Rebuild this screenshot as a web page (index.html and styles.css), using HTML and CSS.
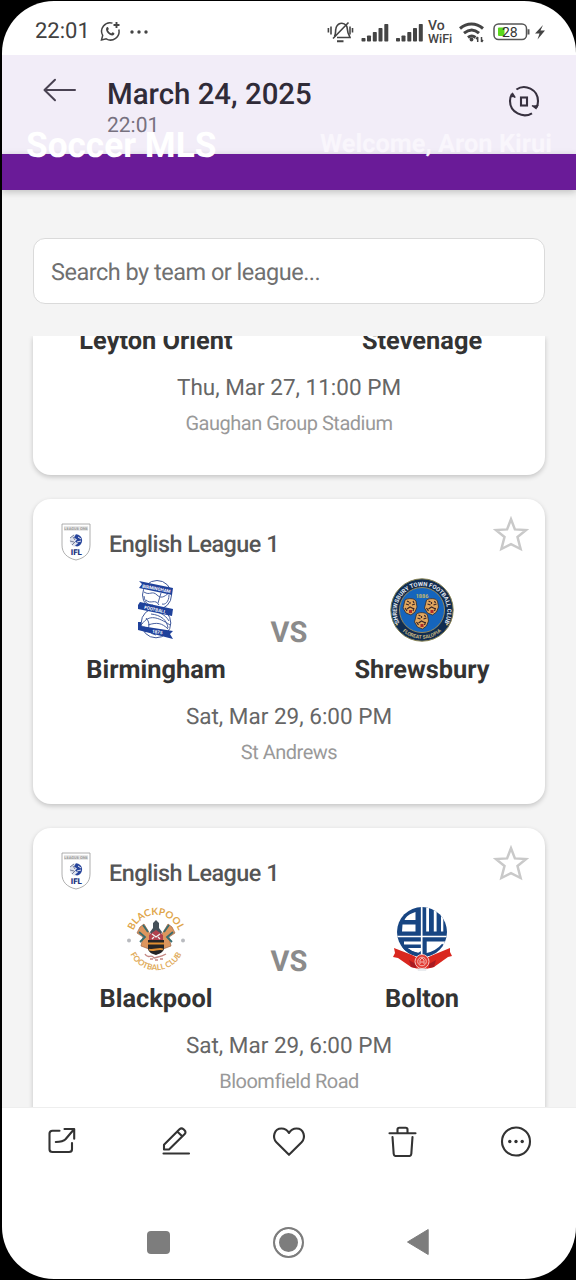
FILE: index.html
```html
<!DOCTYPE html>
<html lang="en">
<head>
<meta charset="utf-8">
<title>Soccer MLS</title>
<link rel="stylesheet" href="styles.css">
</head>
<body>
<svg class="defs" width="0" height="0" aria-hidden="true">
  <symbol id="star" viewBox="0 0 36 36"><path d="M18 3.2 L21.9 13.4 L33.2 14 L24.5 21 L27.6 33 L18 28.2 L8.400 33 L11.500 21 L2.800 14 L14.100 13.400 Z" fill="none" stroke="#c9c9c9" stroke-width="2.500"/></symbol>
  <symbol id="league" viewBox="0 0 30 38">
    <path d="M1 1H29V22C29 30 24 35 15 37C6 35 1 30 1 22Z" fill="#fff" stroke="#999" stroke-width=".8"/>
    <path d="M3 3H27V8H3Z" fill="#e8e8e8"/>
    <text x="15" y="7.300" class="t-league-top" text-anchor="middle">LEAGUE ONE</text>
    <circle cx="15" cy="17.500" r="6.300" fill="#dfe3ee"/>
    <path d="M15 11.300a6.200 6.200 0 0 1 1 12.300l-2-1 3-2-3-2 2-2-3-2z" fill="#27449b"/>
    <path d="M9 15l4-3M9 18l4 1M11 22l3-3M12 14l2 3" stroke="#777f99" stroke-width="1"/>
    <path d="M17 14l3 2M16 19l4-1" stroke="#fff" stroke-width=".9"/>
    <text x="15.300" y="31.500" class="t-league" text-anchor="middle">IFL</text>
  </symbol>
</svg>
<div class="screen">
  <div class="status">
    <span class="clock">22:01</span>
    <svg class="chat" width="21" height="21" viewBox="0 0 21 21" fill="none" stroke="#444" stroke-width="1.500"><path d="M12.500 2.100A8.500 8.500 0 0 0 2.700 14.400L1.500 19l4.700-1.200A8.500 8.500 0 0 0 18.800 8.500"/><path d="M16.500 1v6M13.500 4h6" stroke-width="1.900"/><path d="M6.500 6.500c1-1 1.600-.6 2.300 1.400L8 9.300c.8 1.600 1.800 2.500 3.200 3.100l1.300-1.100c2 .7 2.300 1.200 1.600 2.200-1 1.300-2.600 1.300-4.700-.1C7 11.800 5.200 9 6.500 6.500z" fill="#444" stroke="none"/></svg>
    <svg class="more" width="20" height="6" viewBox="0 0 20 6" fill="#444"><circle cx="3" cy="3" r="1.700"/><circle cx="10" cy="3" r="1.700"/><circle cx="17" cy="3" r="1.700"/></svg>
    <svg class="tray" width="222" height="26" viewBox="327 18 222 26" fill="#444">
      <g fill="none" stroke="#444" stroke-width="1.600"><path d="M334.500 35.500c1.500-2.500.8-5 1.300-7.500 1-6 7-7.500 10.500-3.500 1.800 2.500.5 6.500 2.700 9.500l1 2.500h-13"/><path d="M348.500 21.500 333 37.500M331 25.500v8M328.400 27v4.500M350 25.500v8M352.500 27v4.500"/><path d="M337 40.200h6.500" stroke-width="2"/></g>
      <g id="bars"><rect x="361.500" y="37" width="4" height="3.500" rx=".8"/><rect x="367" y="34.500" width="4" height="6" rx=".8"/><rect x="372.800" y="31" width="4" height="9.500" rx=".8"/><rect x="378.500" y="27" width="4" height="13.500" rx=".8"/><rect x="384.300" y="23" width="4" height="17.500" rx=".8"/></g>
      <use href="#bars" x="34.500"/>
      <text x="428" y="29" class="t-net">Vo</text><text x="428" y="41.500" class="t-net wifi">WiFi</text>
      <g fill="none" stroke="#444" stroke-width="3"><path d="M460 27.500c7-6 16-6 23 0M464 32.200c5-4 10.500-4 15 0M468 36.500c2.500-2 5-2 7.500 0" /></g><circle cx="471.500" cy="38.500" r="1.900"/><path d="M477.700 41v-5M476 38l1.700-2M481.500 36v5M483 39l-1.500 2" stroke="#444" stroke-width="1.500"/>
      <rect x="494" y="23" width="32.500" height="15.500" rx="4.500" fill="#fff" stroke="#555" stroke-width="1.500"/><rect x="498" y="26.500" width="6.500" height="8.500" rx="1" fill="#5bd81d"/><path d="M528.500 28.200v5.200" stroke="#555" stroke-width="2"/>
      <text x="502" y="36" class="t-batt">28</text>
      <path d="M543 24 535 32.500h4.500L537.500 38.500 545 29.500h-4.500z"/>
    </svg>
  </div>
  <header class="viewer">
    <svg class="back" width="34" height="24" viewBox="0 0 34 24" fill="none" stroke="#4a4353" stroke-width="2" stroke-linecap="round" stroke-linejoin="round"><path d="M1.500 12H32M12 1.800 1.500 12 12 22.200"/></svg>
    <div class="when"><span class="date">March 24, 2025</span><span class="time">22:01</span></div>
    <svg class="scan" width="34" height="34" viewBox="0 0 34 34" fill="none" stroke="#37313f" stroke-width="2.100"><path d="M9.400 5.500C18-.6 31 5.500 31 17c0 2.400-.5 4.500-1.400 6.300M25 29.300C16 34.500 3 28.500 3 17c0-3 .7-5 2-7.300"/><path d="M8.200 13.600 5.700 9.800 4 13M31 21l-2 3.500-4-3" fill="#37313f" stroke-width="1.500"/><rect x="14" y="13.500" width="6" height="8"/></svg>
  </header>
  <div class="appbar"><b class="brand">Soccer MLS</b><b class="welcome">Welcome, Aron Kirui</b></div>
  <main class="page">
    <div class="search">Search by team or league...</div>
    <section class="list">
      <article class="card clipped">
        <div class="match"><div class="team"><span class="name">Leyton Orient</span></div><span></span><div class="team"><span class="name">Stevenage</span></div></div>
        <p class="kick">Thu, Mar 27, 11:00 PM</p><p class="venue">Gaughan Group Stadium</p>
      </article>
      <article class="card">
        <div class="head"><svg class="badge" width="30" height="38"><use href="#league"/></svg><span class="comp">English League 1</span><svg class="fav" width="36" height="36"><use href="#star"/></svg></div>
        <div class="match">
          <div class="team">
            <svg width="64" height="64" viewBox="0 0 64 64">
              <g fill="#fff" stroke="#3d5699" stroke-width="1"><circle cx="33" cy="17" r="14.500"/><circle cx="32" cy="45" r="14.800"/></g>
              <path d="M20 14c6 4 8-2 13 3s9 0 13-3M22 22c5 5 9-2 13 5M20 18c1 8 6 10 9 9M37 15l-3 10M45 17c0 7-4 10-7 9M18 46c7-10 16-7 28 1M27 36c10 1 16 6 17 14M22 40c5 5 3 12-1 14M24 47c9-3 14-2 20 4M32 33c3 2 9 3 13 10M19 49c6 0 4 6 13 8" fill="none" stroke="#4860a0" stroke-width="1"/>
              <g fill="#1f419b"><path d="M15 3 49 10l-1 7-33-7 3-4z"/><path d="M14 27l2-3 33 7-1 7-34-7z"/><path d="M14 44l3 0 0 4 32 5-3 3 3 5-35-9z"/></g>
              <text class="t-tiny" transform="translate(18 9.500) rotate(11)">BIRMINGHAM</text><text class="t-tiny" transform="translate(20 30.800) rotate(12)">FOOTBALL</text><text class="t-tiny" transform="translate(28 54.800) rotate(8)">1875</text>
            </svg>
            <span class="name">Birmingham</span>
          </div>
          <span class="vs">VS</span>
          <div class="team">
            <svg width="64" height="64" viewBox="0 0 64 64">
              <defs><path id="st" d="M9 43.800A25.300 25.300 0 1 1 55 43.800"/><path id="sb" d="M10.500 51A28.500 28.500 0 0 0 53.500 51"/></defs>
              <circle cx="32" cy="32" r="31.200" fill="#112d51" stroke="#8b8555" stroke-width="1"/><circle cx="32" cy="32" r="22.500" fill="#1565bd" stroke="#b49b58" stroke-width=".8"/>
              <text class="t-ring"><textPath href="#st" startOffset="50%" text-anchor="middle">SHREWSBURY TOWN FOOTBALL CLUB</textPath></text>
              <text class="t-ring gold"><textPath href="#sb" startOffset="50%" text-anchor="middle">FLOREAT SALOPIA</textPath></text>
              <circle cx="7" cy="46.500" r="1" fill="#c9b46b"/><circle cx="57" cy="46.500" r="1" fill="#c9b46b"/>
              <text x="32" y="19.500" class="t-year" fill="#c7ba6b" text-anchor="middle">1886</text>
              <g id="lion"><path d="M15 22c3-2 9-2 11 1l1 6-2 5-4 3-5-2-3-5z" fill="#e1a75e" stroke="#322929" stroke-width=".8"/><path d="M16 26l3 1M22 27l3-1M17 31l3-2 4 2M20 24v2M15 30l2 3M17 23l2 1M23 23l1 2M24 30l-1 3" stroke="#3a2525" stroke-width="1.200" fill="none"/><path d="M19 32h3v3h-3z" fill="#ae2a27"/></g>
              <use href="#lion" x="21.500"/><use href="#lion" x="11.500" y="14"/>
            </svg>
            <span class="name">Shrewsbury</span>
          </div>
        </div>
        <p class="kick">Sat, Mar 29, 6:00 PM</p><p class="venue">St Andrews</p>
      </article>
      <article class="card">
        <div class="head"><svg class="badge" width="30" height="38"><use href="#league"/></svg><span class="comp">English League 1</span><svg class="fav" width="36" height="36"><use href="#star"/></svg></div>
        <div class="match">
          <div class="team">
            <svg width="64" height="64" viewBox="0 0 64 64">
              <defs><path id="bt" d="M8.500 27A24 24 0 0 1 55.500 27"/><path id="bb" d="M4 40A28.500 28.500 0 0 0 60 40"/></defs>
              <text class="t-bpl" fill="#dfa64b"><textPath href="#bt" startOffset="50%" text-anchor="middle">BLACKPOOL</textPath></text>
              <text class="t-bpl2" fill="#dfac5b"><textPath href="#bb" startOffset="50%" text-anchor="middle">FOOTBALL CLUB</textPath></text>
              <circle cx="5" cy="33.500" r="2" fill="#b9bbc0"/><circle cx="59" cy="33.500" r="2" fill="#b9bbc0"/>
              <path d="M26 27 20 17l-4 3-3 6 6 4-2 9 8 3M38 27l6-10 4 3 3 6-6 4 2 9-8 3" fill="#dc965e" stroke="#9c6548" stroke-width=".7"/>
              <path d="M15 25l6 5-5 5M49 25l-6 5 5 5M19 18l5 7M45 18l-5 7" fill="none" stroke="#356c70" stroke-width="1.800"/>
              <path d="M26 25l3-4v-5l3-3 3 3v5l3 4-2 5h-8z" fill="#46515a"/><path d="M25 28l7-5 7 5v6H25z" fill="#b1404d"/><path d="M28 27l4 3 4-3M28 32l2-2M36 32l-2-2" fill="none" stroke="#eee" stroke-width="1.300"/>
              <path d="M24 33h16v8c0 4-5 6-8 7-4-1-8-3-8-7z" fill="#252426"/><path d="M24 36.500h16M25 42.500c4 2 10-2 14 0" stroke="#df8d31" stroke-width="1.800" fill="none"/>
              <path d="M21 47c3 6 6-1 9 4 3-1 7-1 12-4M26 52h3M31 53h3M36 52h3" fill="none" stroke="#c58883" stroke-width="1.400"/>
            </svg>
            <span class="name">Blackpool</span>
          </div>
          <span class="vs">VS</span>
          <div class="team">
            <svg width="64" height="64" viewBox="0 0 64 64">
              <defs><clipPath id="disc"><circle cx="32" cy="25" r="25"/></clipPath></defs>
              <g clip-path="url(#disc)"><rect x="7" width="50" height="50" fill="#174582"/>
                <path d="M7 29.500H57M31.700 0V50" stroke="#fff" fill="none" stroke-width="1.700"/>
                <g fill="#fff"><path d="M14.500 13C16 9.500 20 6.500 25.500 5v8zM12.500 17.500h13v7H12z"/><path d="M36.200 0h2.800v24.500h-2.800zM43.800 0h2.800v24.500h-2.800zM51 8h2.300v16.500H51z"/><path d="M14 34.600h17v2.900H14zM17 41H31v3l-3 2q-6-1-11-5z"/><path d="M36.700 34.600H60V45h-6C49 47 42 48 36.700 48z"/></g>
                <path d="M36 48Q46 46.500 53.500 38" fill="none" stroke="#174582" stroke-width="3.500"/><path d="M13 39Q20 47 30 48" fill="none" stroke="#174582" stroke-width="3.500"/>
              </g>
              <path d="M4 41 22 48 32 53 43 48 60 41v4l2 4-4 1-14 10-12 3-11-3L8 51l-5-1 2-4z" fill="#d9271f"/><path d="M19 53l7 4v4l-5-1M46 53l-7 4v4l5-1" fill="#a91b22"/>
              <circle cx="32" cy="54.500" r="7" fill="#e23a32" stroke="#f5c5c1" stroke-width="1"/><circle cx="32" cy="54.500" r="4.300" fill="none" stroke="#f5c5c1" stroke-width=".9"/><path d="M30 57v-4l2-2 2 2v4M30.500 55h3" fill="none" stroke="#f9d9d5" stroke-width=".8"/><path d="M27 61.500l10 0-1 2.500h-8z" fill="#e9ecef"/>
            </svg>
            <span class="name">Bolton</span>
          </div>
        </div>
        <p class="kick">Sat, Mar 29, 6:00 PM</p><p class="venue">Bloomfield Road</p>
      </article>
    </section>
  </main>
  <nav class="tools">
    <svg width="32" height="32" viewBox="0 0 32 32"><path d="M13.500 5.800H6.500C4.500 5.800 3.500 6.700 3.500 8.600V24.200C3.500 26.100 4.500 27 6.500 27H23C25 27 26 26.100 26 24.200V18"/><path d="M18.500 4H28.200V13.800M28 4.200 19.500 14.300C17.500 16.500 14.500 17 9.800 17"/></svg>
    <svg width="32" height="32" viewBox="0 0 32 32"><path d="M4.500 28.500H30M5 24.500V19.700L20.500 4.300Q22.500 2.500 24.500 4.300L25.500 5.300Q27.500 7.300 25.500 9.200L10 24.500Z M18.500 6.700 23.200 11.300"/></svg>
    <svg width="36" height="32" viewBox="0 0 36 32"><path d="M18 29.800 5.400 17.200C1 12.500 3 3.500 10.500 3.500 14 3.500 16.500 5.500 18 8 19.500 5.500 22 3.500 25.500 3.500 33 3.500 35 12.500 30.600 17.200Z"/></svg>
    <svg width="32" height="32" viewBox="0 0 32 32"><path d="M1.500 8.300H27.500M9.500 8V4.500Q9.500 2.700 11.300 2.700H17.700Q19.500 2.700 19.500 4.500V8M4.500 12 5.700 29Q5.900 31 7.700 31H21.300Q23.100 31 23.300 29L24.500 12"/></svg>
    <svg width="32" height="32" viewBox="0 0 32 32"><circle cx="16" cy="16.500" r="14"/><g fill="#333" stroke="none"><circle cx="9.800" cy="16.500" r="1.700"/><circle cx="16" cy="16.500" r="1.700"/><circle cx="22.200" cy="16.500" r="1.700"/></g></svg>
  </nav>
  <nav class="keys">
    <span class="recent"></span>
    <span class="home"></span>
    <svg width="22" height="28" viewBox="0 0 22 28"><path d="M21.200 1.500V26.500L.5 14Z" fill="#7d7d7d" stroke="#7d7d7d" stroke-width="1" stroke-linejoin="round"/></svg>
  </nav>
</div>
</body>
</html>
```
FILE: styles.css
```css
* { box-sizing: border-box; }
body { margin: 0; height: 1280px; padding: 1px 0 1px 2px; background: #000; font-family: Roboto, "Liberation Sans", sans-serif; overflow: hidden; text-rendering: geometricPrecision; }
.defs { position: absolute; }
.screen { width: 574px; height: 1278px; border-radius: 52px; background: #fff; overflow: hidden; display: flex; flex-direction: column; }
.status { height: 54px; flex: none; display: flex; align-items: center; padding: 7px 27px 0 33px; color: #414141; }
.clock { font-size: 22px; line-height: 28px; padding-top: 1px; }
.chat { margin-left: 10px; margin-bottom: 1px; }
.more { margin-left: 8px; }
.tray { margin-left: auto; }
.viewer { height: 99px; flex: none; background: #f2edf8; display: flex; padding: 0 35px 0 41px; }
.back { margin-top: 23px; }
.when { display: flex; flex-direction: column; margin-left: 30px; padding-top: 22px; }
.date { font-size: 29.400px; line-height: 36px; font-weight: 500; color: #302b38; white-space: nowrap; }
.time { font-size: 21px; line-height: 26px; color: #77717f; }
.scan { margin: 29px 0 0 auto; }
.appbar { height: 36px; flex: none; background: #6a1b98; position: relative; z-index: 1; box-shadow: 0 2px 7px rgba(0,0,0,.22); clip-path: inset(-40px 0 -12px 0); color: #fff; }
.brand { position: absolute; left: 24px; top: -29px; font-size: 35.200px; line-height: 40px; white-space: nowrap; }
.welcome { position: absolute; right: 24px; top: -25px; font-size: 25.400px; line-height: 30px; font-weight: 700; color: #f9f6fc; white-space: nowrap; }
.page { height: 917px; flex: none; background: #f4f4f4; padding: 48px 31px 0; }
.search { height: 66px; border: 1px solid #dadada; border-radius: 12px; background: #fff; padding: 0 17px; font-size: 23.500px; line-height: 66px; letter-spacing: -.5px; color: #707070; white-space: nowrap; }
.list { height: 771px; margin: 32px -31px 0; padding: 0 31px; overflow: hidden; display: flex; flex-direction: column; gap: 24px; }
.card { height: 305px; flex: none; border-radius: 18px; background: #fff; box-shadow: 0 2px 5px rgba(0,0,0,.2); display: flex; flex-direction: column; }
.clipped { height: 139px; border-radius: 0 0 18px 18px; }
.clipped .match { margin-top: -11px; }
.head { height: 79px; flex: none; display: flex; padding: 0 16px 0 28px; }
.badge { margin-top: 24px; }
.comp { margin-left: 18px; font-size: 23.400px; font-weight: 500; letter-spacing: -.5px; line-height: 30px; margin-top: 30px; color: #555; }
.fav { margin: 17px 0 0 auto; }
.match { display: grid; grid-template-columns: 200px 66px 200px; justify-content: center; align-items: center; }
.team { display: flex; flex-direction: column; align-items: center; }
.team svg { margin-bottom: 12px; }
.name { font-size: 25.400px; line-height: 32px; font-weight: 700; color: #333; white-space: nowrap; }
.vs { text-align: center; font-size: 29px; line-height: 34px; padding-top: 2px; font-weight: 700; color: #8b8b8b; }
.kick, .venue { margin: 17px 0 0; text-align: center; font-size: 22.500px; line-height: 28px; color: #666; }
.venue { margin-top: 9px; font-size: 20px; line-height: 24px; letter-spacing: -.5px; color: #999; }
.tools { height: 90px; flex: none; border-top: 1px solid #eee; display: flex; justify-content: space-between; padding: 17px 44px 0; }
.tools svg { fill: none; stroke: #333; stroke-width: 2.100; stroke-linecap: round; stroke-linejoin: round; }
.keys { display: flex; flex: none; align-items: center; height: 90px; padding: 0 147px 0 145px; justify-content: space-between; }
.recent { width: 23px; height: 23px; border-radius: 4px; background: #7d7d7d; }
.home { width: 31px; height: 31px; border: 2px solid #7d7d7d; border-radius: 50%; background: #7d7d7d; box-shadow: inset 0 0 0 4px #fff; }
.t-league { font: 900 8px Roboto, sans-serif; fill: #1d347f; }
.t-league-top { font: 700 4px Roboto, sans-serif; fill: #999; }
.t-net { font: 500 14px Roboto, sans-serif; }
.wifi { font-size: 12.500px; }
.t-batt { font: 400 14px Roboto, sans-serif; fill: #333; }
.t-tiny { font: 700 4.500px Roboto, sans-serif; fill: #fff; }
.t-ring { font: 700 5.900px Roboto, sans-serif; fill: #e3e9f2; }
.gold { font-size: 5px; fill: #c9b984; }
.t-year { font: 700 5.500px Roboto, sans-serif; }
.t-bpl { font: 700 9.800px Lato, sans-serif; }
.t-bpl2 { font: 700 8px Lato, sans-serif; }
```
